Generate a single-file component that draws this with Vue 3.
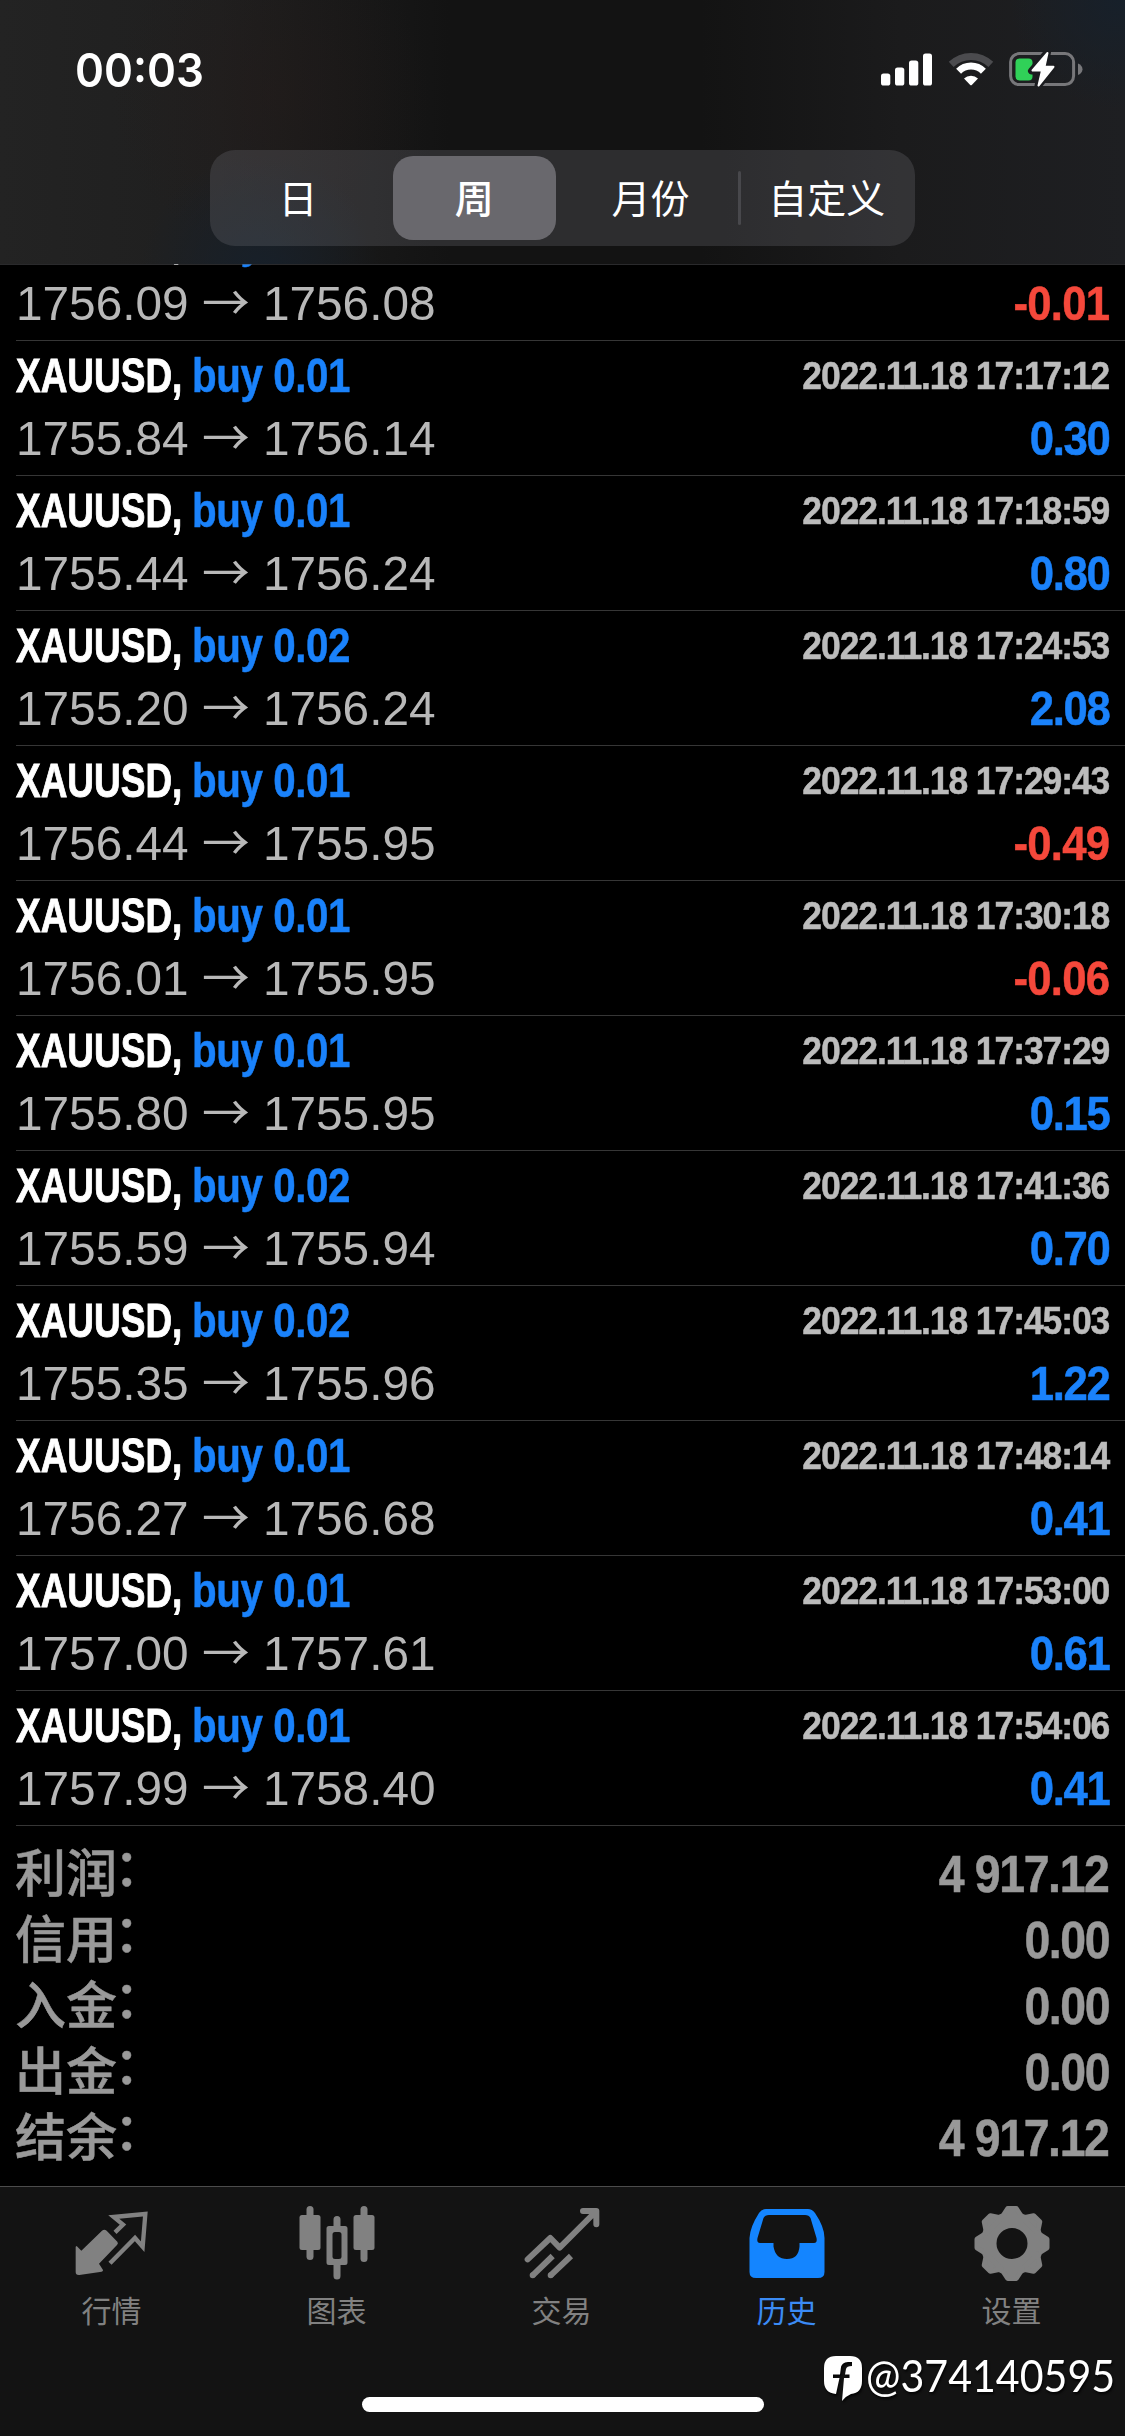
<script setup>
const segments = ['日', '周', '月份', '自定义']

const deals = [
  { lot: '0.01', time: '2022.11.18 17:15:20', open: '1756.09', close: '1756.08', profit: '-0.01' },
  { lot: '0.01', time: '2022.11.18 17:17:12', open: '1755.84', close: '1756.14', profit: '0.30' },
  { lot: '0.01', time: '2022.11.18 17:18:59', open: '1755.44', close: '1756.24', profit: '0.80' },
  { lot: '0.02', time: '2022.11.18 17:24:53', open: '1755.20', close: '1756.24', profit: '2.08' },
  { lot: '0.01', time: '2022.11.18 17:29:43', open: '1756.44', close: '1755.95', profit: '-0.49' },
  { lot: '0.01', time: '2022.11.18 17:30:18', open: '1756.01', close: '1755.95', profit: '-0.06' },
  { lot: '0.01', time: '2022.11.18 17:37:29', open: '1755.80', close: '1755.95', profit: '0.15' },
  { lot: '0.02', time: '2022.11.18 17:41:36', open: '1755.59', close: '1755.94', profit: '0.70' },
  { lot: '0.02', time: '2022.11.18 17:45:03', open: '1755.35', close: '1755.96', profit: '1.22' },
  { lot: '0.01', time: '2022.11.18 17:48:14', open: '1756.27', close: '1756.68', profit: '0.41' },
  { lot: '0.01', time: '2022.11.18 17:53:00', open: '1757.00', close: '1757.61', profit: '0.61' },
  { lot: '0.01', time: '2022.11.18 17:54:06', open: '1757.99', close: '1758.40', profit: '0.41' },
]

const totals = [
  ['利润', '4 917.12'],
  ['信用', '0.00'],
  ['入金', '0.00'],
  ['出金', '0.00'],
  ['结余', '4 917.12'],
]

const teeth = [0, 45, 90, 135, 180, 225, 270, 315]
</script>

<template>
  <div class="screen">
    <header class="top">
      <div class="status">
        <span class="clock">00:03</span>
        <div class="indicators">
          <svg class="signal" viewBox="0 0 51 33" width="51" height="33" fill="#fff">
            <rect x="0" y="20.5" width="9.3" height="12" rx="2.6" />
            <rect x="14" y="14.5" width="9.3" height="18" rx="2.6" />
            <rect x="28" y="7.5" width="9.3" height="25" rx="2.6" />
            <rect x="42" y="0.5" width="9" height="32" rx="2.6" />
          </svg>
          <svg class="wifi" viewBox="0 0 46 34" width="46" height="34">
            <path d="M3.2 12.4A28.6 28.6 0 0 1 42.8 12.4" fill="none" stroke="#4b4b4e" stroke-width="7" />
            <path d="M10.6 19.2A17.6 17.6 0 0 1 35.4 19.2" fill="none" stroke="#fff" stroke-width="7" />
            <path d="M16 26.6A10 10 0 0 1 30 26.6L24 32.8Q23 33.8 22 32.8Z" fill="#fff" />
          </svg>
          <svg class="battery" viewBox="0 0 75 36" width="75" height="36">
            <rect x="1.6" y="2.6" width="63" height="31" rx="8.5" fill="none" stroke="#77777a" stroke-width="3" />
            <path d="M69 12.5Q73.5 14.5 73.5 18.2T69 24Z" fill="#77777a" />
            <rect x="6.5" y="7.5" width="17" height="22" rx="4" fill="#30d158" />
            <path d="M38.5 1L22.5 20H32L29 35L45.5 15.5H36Z" fill="#fff" stroke="#1b1c1f" stroke-width="7" stroke-linejoin="round" />
            <path d="M38.5 2L23.5 19.5H33L29.5 34.5L44.5 15.8H35.5Z" fill="#fff" stroke="#fff" stroke-width="2" stroke-linejoin="round" />
          </svg>
        </div>
      </div>
      <nav class="segmented">
        <span v-for="(s, i) in segments" :key="s" class="segment" :class="{ active: i === 1, divided: i === 3 }">{{ s }}</span>
      </nav>
    </header>

    <main class="history">
      <article v-for="d in deals" :key="d.time" class="deal">
        <div class="line">
          <span class="symbol"><b class="cond">XAUUSD,</b></span>
          <b class="cond side">buy {{ d.lot }}</b>
          <b class="cond time">{{ d.time }}</b>
        </div>
        <div class="line">
          <span class="prices">{{ d.open }} <i class="arrow">→</i> {{ d.close }}</span>
          <b class="cond profit" :class="{ loss: d.profit[0] === '-' }">{{ d.profit }}</b>
        </div>
      </article>
    </main>

    <section class="totals">
      <div v-for="t in totals" :key="t[0]" class="total">
        <span class="label">{{ t[0] }}<span class="colon">：</span></span>
        <b class="cond sum">{{ t[1] }}</b>
      </div>
    </section>

    <footer class="tabbar">
      <div class="tabs">
        <div class="tab">
          <svg viewBox="-7 0 300 300" width="100" height="100">
            <path d="M34 153L48 167L110 107Q117 101 124 107L156 140Q160 145 155 150L101 206L113 225Q114 229 109 230L42 240Q31 241 31 231L31 155Z" fill="#818181" />
            <path d="M149 112L173 89L145 66L240 57L232 155L209 129L134 205" fill="none" stroke="#818181" stroke-width="13" />
          </svg>
          <span>行情</span>
        </div>
        <div class="tab">
          <svg viewBox="0 0 100 100" width="100" height="100" fill="#818181">
            <rect x="11.5" y="20" width="21" height="35" rx="2.5" />
            <rect x="18.5" y="11" width="7" height="54" rx="3.5" />
            <path fill-rule="evenodd" d="M41 31H57Q59.5 31 59.5 33.5V67.5Q59.5 70 57 70H41Q38.5 70 38.5 67.5V33.5Q38.5 31 41 31ZM47 37Q44.5 37 44.5 39.5V62Q44.5 64 47 64H51Q53.5 64 53.5 62V39.5Q53.5 37 51 37Z" />
            <path d="M45.5 32V24.5A3.5 3.5 0 0 1 52.5 24.5V32ZM45.5 69V81A3.5 3.5 0 0 0 52.5 81V69Z" />
            <rect x="65.5" y="20" width="21" height="35" rx="2.5" />
            <rect x="72.5" y="11" width="7" height="56" rx="3.5" />
          </svg>
          <span>图表</span>
        </div>
        <div class="tab">
          <svg viewBox="-7 0 300 300" width="100" height="100" fill="none" stroke="#818181" stroke-width="18" stroke-linejoin="round">
            <path d="M37 193L105 129L133 158L240 51M203 48H243V88" stroke-linecap="round" />
            <path d="M112 183L52 241M167 183L106 241" />
            <path d="M52 241h.1M106 241h.1" stroke-linecap="round" />
          </svg>
          <span>交易</span>
        </div>
        <div class="tab selected">
          <svg viewBox="0 0 100 100" width="100" height="100" fill="#1485ff">
            <path fill-rule="evenodd" d="M28 14H70Q74 14 77 18Q86.5 32 86.5 43V77Q86.5 83 80 83H18Q11.5 83 11.5 77V43Q12 32 21 18Q24 14 28 14ZM31 20H67Q71 20 72.5 23L78.5 43Q79.5 48 76 48H61.5V51.5Q60.5 64 49 64Q37.5 64 35.5 51.5V48H22Q18.5 48 19.5 43L25.5 23Q27 20 31 20Z" />
          </svg>
          <span>历史</span>
        </div>
        <div class="tab">
          <svg viewBox="0 0 100 100" width="100" height="100">
            <circle cx="49" cy="48.500" r="23.500" fill="none" stroke="#818181" stroke-width="16" />
            <path
              v-for="a in teeth"
              :key="a"
              d="M38.500 23L44.700 13.500H53.300L59.500 23Z"
              fill="#818181"
              stroke="#818181"
              stroke-width="5"
              stroke-linejoin="round"
              :transform="`rotate(${a} 49 48.5)`"
            />
          </svg>
          <span>设置</span>
        </div>
      </div>
      <div class="home"></div>
    </footer>

    <div class="watermark">
      <svg viewBox="0 0 40 50" width="40" height="50">
        <path d="M13 1H27Q39 1 39 13V26Q39 38 28 39Q23 41 19 46L21 23H26.5V19.5H22L23 14Q23.5 11 29 11V7H25Q18.5 7 17.8 13.5L17 19.5H10V23H16.5L13 39Q1 38 1 26V13Q1 1 13 1Z" fill="#fff" />
      </svg>
      <span>@374140595</span>
    </div>
  </div>
</template>

<style>
body {
  background: #000;
}
</style>

<style scoped>
.screen {
  position: relative;
  display: flex;
  flex-direction: column;
  width: 1125px;
  height: 2436px;
  overflow: hidden;
  background: #000;
  font-family: "Liberation Sans", "Noto Sans CJK SC", sans-serif;
}
.top {
  position: relative;
  z-index: 1;
  box-sizing: border-box;
  height: 265px;
  flex: none;
  border-bottom: 1px solid rgba(84, 84, 88, 0.5);
  background:
    radial-gradient(circle at 260px 275px, #17202a 0, rgba(23, 32, 42, 0) 120px),
    radial-gradient(circle at 1120px 0, #17202a 0, rgba(23, 32, 42, 0) 110px),
    radial-gradient(circle at 270px 95px, rgba(38, 27, 25, 0.4) 0, rgba(38, 27, 25, 0) 160px),
    linear-gradient(90deg, #232323 0, #1f1f1f 220px, #131313 450px, #131313 700px, #1b1b1c 900px, #1e1f22 1125px);
  background-clip: padding-box;
}
.status {
  display: flex;
  justify-content: space-between;
  height: 150px;
}
.clock {
  margin: 40px 0 0 75px;
  font: 600 46.5px/60px Inter, sans-serif;
  color: #fff;
  height: 60px;
  transform: scaleX(0.945);
  transform-origin: left center;
}
.indicators {
  display: flex;
  padding: 51px 41px 0 0;
}
.signal {
  margin: 2px 16px 0 0;
}
.wifi {
  margin: 1px 15px 0 0;
}
.segmented {
  display: flex;
  width: 705px;
  height: 96px;
  margin: 0 auto;
  border-radius: 25px;
  background: rgba(118, 118, 128, 0.26);
}
.segment {
  position: relative;
  flex: 1;
  box-sizing: border-box;
  height: 84px;
  margin: 6px 7px;
  border-radius: 20px;
  font: 400 39px/81px "Noto Sans CJK SC", sans-serif;
  text-align: center;
  white-space: nowrap;
  color: #fff;
}
.segment.active {
  background: #69686d;
  font-weight: 500;
}
.segment.divided::before {
  content: "";
  position: absolute;
  left: -8px;
  top: 15px;
  width: 3px;
  height: 54px;
  border-radius: 2px;
  background: #48484c;
}
.history {
  flex: none;
  margin-top: -1px;
  overflow: hidden;
}
.deal {
  box-sizing: border-box;
  height: 135px;
  margin-left: 16px;
  padding: 5px 16px 0 0;
  border-bottom: 1px solid #363636;
}
.deal:first-child {
  margin-top: -58px;
}
.line {
  display: flex;
  height: 63px;
  font-size: 48px;
  line-height: 60px;
  white-space: nowrap;
}
.cond {
  display: inline-block;
  font-weight: 700;
  transform-origin: left center;
  -webkit-text-stroke: 0.5px currentColor;
}
.symbol {
  width: 176px;
  color: #fff;
}
.symbol .cond {
  transform: scaleX(0.77);
  -webkit-text-stroke: 0.9px currentColor;
}
.side {
  color: #1a82fb;
  letter-spacing: -0.5px;
  transform: scaleX(0.84);
}
.time,
.profit,
.sum {
  margin-left: auto;
  letter-spacing: -1.5px;
  transform-origin: right center;
  transform: scaleX(0.91);
}
.time {
  font-size: 39px;
  line-height: 59px;
  letter-spacing: -1.2px;
  color: #bcbcbc;
}
.prices {
  white-space: pre;
  color: #b8b8b8;
  transform: scaleX(0.995);
  transform-origin: left center;
}
.arrow {
  display: inline-block;
  width: 48px;
  height: 50px;
  font: 400 48px/50px "Noto Sans CJK SC", sans-serif;
}
.profit {
  color: #1a82fb;
}
.profit.loss {
  letter-spacing: -0.8px;
  color: #f5483b;
}
.totals {
  flex: none;
  height: 360px;
  box-sizing: border-box;
  padding: 16px 16px 0 15px;
  color: #999;
}
.total {
  display: flex;
  height: 66px;
  font-size: 51px;
  line-height: 66px;
}
.label {
  font-weight: 500;
  -webkit-text-stroke: 0.5px currentColor;
}
.colon {
  position: relative;
  left: -3px;
  top: -6px;
}
.tabbar {
  display: flex;
  flex: none;
  flex-direction: column;
  align-items: center;
  box-sizing: border-box;
  height: 250px;
  border-top: 1px solid #4c4c4c;
  background: #131313;
}
.tabs {
  display: flex;
  width: 100%;
  height: 210px;
}
.tab {
  flex: 1;
  display: flex;
  flex-direction: column;
  align-items: center;
  padding-top: 8px;
  font: 400 30px/40px "Noto Sans CJK SC", sans-serif;
  color: #818181;
}
.tab span {
  margin: -6px 2px 0 0;
}
.tab.selected {
  color: #3b8bf5;
}
.home {
  width: 402px;
  height: 15px;
  border-radius: 8px;
  background: #fff;
}
.watermark {
  position: absolute;
  left: 823px;
  top: 2355px;
  display: flex;
  color: #fff;
  filter: drop-shadow(1px 2px 1px rgba(0, 0, 0, 0.8));
}
.watermark span {
  margin: -2px 0 0 3px;
  font: 400 44px/44px Lato, sans-serif;
  transform: scaleX(0.935);
  transform-origin: left center;
}
</style>
